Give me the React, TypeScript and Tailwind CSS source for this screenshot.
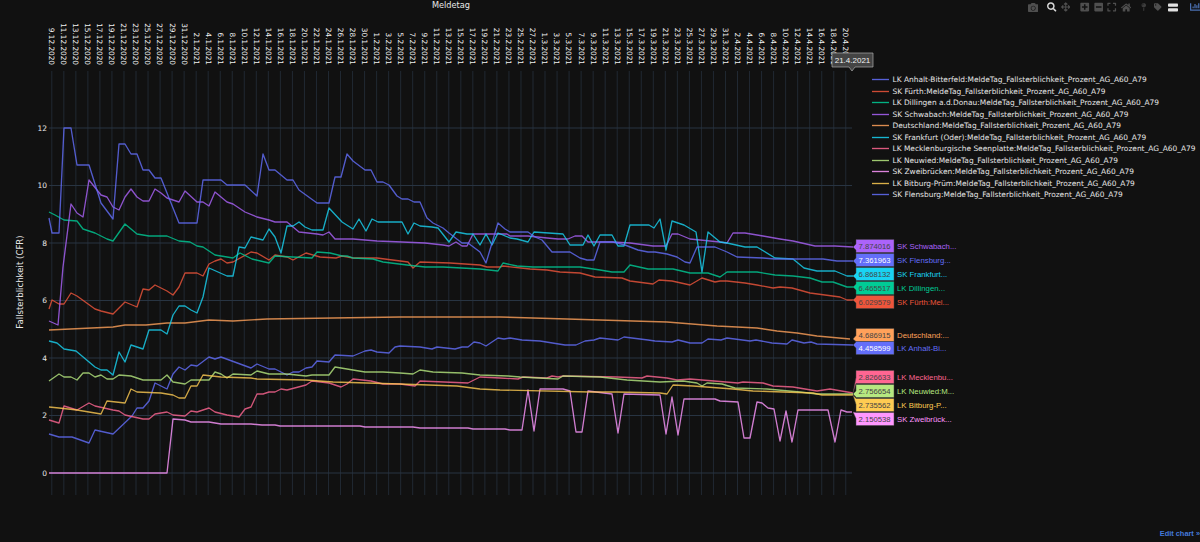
import {
  FaCamera,
  FaSearch,
  FaArrowsAlt,
  FaPlusSquare,
  FaMinusSquare,
  FaExpand,
  FaHome,
  FaMapPin,
  FaTag,
  FaChartBar,
} from 'react-icons/fa';

// traces are traced in chart pixels, same coordinate space as the svg
const SERIES = [
  {
    name: 'LK Anhalt-Bitterfeld',
    color: '#636efa',
    points:
      '49,434 59,437 72,437 89,443 95,430 113,434 132,416 137,408 143,408 149,401 155,383 167,389 173,374 179,367 185,370 191,365 197,366 209,357 215,359 221,357 251,368 257,364 269,369 275,369 287,375 293,372 299,372 306,368 312,367 317,361 329,362 335,355 353,356 365,351 371,350 377,352 389,353 395,347 400,346 420,347 432,349 437,347 455,349 462,347 468,347 474,342 480,343 486,346 498,338 504,339 510,338 522,340 540,341 565,345 576,345 585,341 594,340 600,338 618,340 624,337 648,340 655,341 672,342 678,340 690,343 702,343 708,339 721,340 727,338 750,341 756,340 772,343 787,344 792,340 804,343 811,342 817,344 853,345',
  },
  {
    name: 'SK Fürth',
    color: '#ef553b',
    points:
      '49,309 52,300 59,304 64,304 71,293 77,296 95,309 101,311 113,314 125,302 137,307 143,289 149,290 155,285 167,291 173,295 179,287 185,273 197,273 203,276 209,264 215,261 221,259 227,263 233,262 251,252 257,253 269,260 275,255 287,257 293,260 306,253 320,257 336,258 342,256 353,258 377,258 408,262 413,268 420,262 450,263 480,265 487,267 500,267 503,266 530,269 547,270 560,272 580,273 595,277 622,278 630,281 653,284 659,280 672,281 690,285 702,278 715,282 720,281 727,281 745,283 757,285 773,288 780,287 792,288 810,293 840,297 847,300 855,300',
  },
  {
    name: 'LK Dillingen a.d.Donau',
    color: '#00cc96',
    points:
      '49,212 55,215 64,220 77,221 83,229 89,231 95,233 107,239 113,241 125,224 137,234 149,236 167,236 179,241 190,242 197,246 203,247 215,255 227,257 233,258 240,253 252,259 269,263 275,256 293,257 312,258 317,252 330,253 342,256 347,256 353,258 373,259 383,262 407,265 425,267 443,267 480,269 498,271 503,263 517,266 533,267 560,267 580,267 600,270 612,272 624,272 630,265 648,269 673,269 690,273 708,273 720,277 727,272 757,272 775,275 793,276 810,278 822,282 833,282 847,287 855,287',
  },
  {
    name: 'SK Schwabach',
    color: '#ab63fa',
    points:
      '49,321 58,325 63,267 71,204 77,213 83,217 89,180 101,195 107,197 113,207 119,210 125,197 131,189 137,197 143,201 149,201 155,189 161,193 167,198 179,202 185,191 197,202 203,202 209,206 215,192 227,202 233,204 245,212 257,217 269,220 275,222 287,222 299,232 317,234 323,235 329,232 335,239 353,239 365,240 377,241 402,242 425,243 443,245 449,246 456,242 462,246 467,246 473,234 507,234 510,236 528,236 547,238 558,239 568,239 575,236 582,236 588,242 612,242 630,243 653,246 666,246 672,234 678,234 690,239 720,242 727,243 733,233 745,233 763,236 780,239 793,241 815,246 835,246 853,247',
  },
  {
    name: 'Deutschland',
    color: '#ffa15a',
    points:
      '49,330 113,327 125,325 146,325 167,323 185,323 209,320 233,321 267,319 333,318 400,317 500,317 567,319 633,321 667,322 717,326 757,328 777,331 797,333 817,336 850,339',
  },
  {
    name: 'SK Frankfurt (Oder)',
    color: '#19d3f3',
    points:
      '49,341 57,343 64,349 76,351 95,367 101,370 107,370 113,375 119,352 125,362 131,345 143,349 149,330 161,330 167,334 173,315 179,306 185,306 191,310 197,313 203,297 209,268 227,276 233,276 239,247 245,248 251,237 263,240 269,229 275,237 281,253 287,226 293,226 299,222 305,227 312,230 323,230 329,208 342,222 353,229 359,219 366,231 372,219 378,222 402,222 408,234 414,223 420,226 432,227 438,228 449,242 456,232 467,234 473,234 480,245 486,234 492,245 498,233 510,238 517,239 528,242 534,232 563,234 570,245 583,245 588,235 594,246 600,235 612,235 618,246 624,246 630,225 649,225 654,228 660,219 666,250 672,221 678,223 684,225 696,232 702,272 708,232 714,237 720,242 727,243 745,247 757,247 775,258 793,259 804,268 817,271 835,271 847,276 855,276',
  },
  {
    name: 'LK Mecklenburgische Seenplatte',
    color: '#ff6692',
    points:
      '49,420 59,423 64,406 77,410 89,403 95,406 113,410 119,411 125,415 143,419 149,419 155,414 167,412 173,415 185,416 191,411 197,412 209,408 215,412 227,415 239,417 245,409 251,407 257,394 263,394 269,392 275,392 281,389 287,390 306,385 312,381 329,383 341,387 347,384 353,379 371,381 383,384 400,384 415,386 420,381 468,383 480,377 500,378 518,379 523,377 547,378 552,376 558,377 563,376 617,377 642,378 647,376 667,378 677,380 690,379 738,383 743,382 763,383 773,386 793,387 817,391 830,389 853,393',
  },
  {
    name: 'LK Neuwied',
    color: '#b6e880',
    points:
      '49,381 59,374 64,377 71,377 77,380 83,373 89,373 95,377 101,375 107,379 113,379 119,375 131,376 143,380 161,380 167,375 173,382 185,384 191,380 209,380 215,372 221,374 227,378 233,374 251,375 257,371 269,374 287,374 306,376 312,375 329,375 335,367 341,368 353,370 365,372 383,372 400,373 413,374 420,370 433,372 462,373 480,375 508,376 520,377 558,379 563,376 600,377 627,380 660,382 683,381 697,383 702,386 707,383 722,384 735,388 767,389 800,392 817,394 853,394',
  },
  {
    name: 'SK Zweibrücken',
    color: '#ff97ff',
    points:
      '49,473 167,473 173,419 185,420 191,422 209,422 221,424 251,424 262,425 275,425 280,426 360,426 365,427 413,427 420,428 468,428 473,429 505,429 510,430 522,430 528,390 534,431 540,389 563,389 570,391 576,432 582,432 588,391 612,394 618,433 624,394 660,395 666,434 672,397 678,435 684,399 715,399 720,401 738,402 744,438 750,438 757,402 762,403 768,408 774,409 780,441 786,411 792,442 798,410 828,410 835,442 841,410 847,412 852,412',
  },
  {
    name: 'LK Bitburg-Prüm',
    color: '#fecb52',
    points:
      '49,407 59,408 77,410 95,413 101,414 107,401 125,403 131,389 137,392 161,393 173,395 179,398 185,398 191,386 197,386 203,375 221,377 251,378 257,379 306,380 333,382 367,383 400,384 457,386 480,389 500,390 590,392 617,392 660,393 667,394 673,385 693,386 733,389 753,391 783,392 813,393 822,395 853,395',
  },
  {
    name: 'SK Flensburg',
    color: '#636efa',
    points:
      '49,218 52,233 59,233 64,128 71,128 77,165 89,165 101,203 113,219 119,144 125,144 131,154 137,154 143,170 149,170 155,178 161,178 179,223 197,223 203,180 221,180 227,185 245,185 257,196 263,154 269,170 275,170 287,180 293,180 299,190 317,203 329,203 335,177 341,177 347,154 353,161 365,170 371,170 377,182 383,182 389,185 397,196 402,199 408,199 414,202 420,202 427,218 433,223 443,228 449,233 462,243 468,243 480,252 486,263 498,223 505,229 510,232 528,232 535,237 542,240 552,252 570,252 580,258 587,260 594,260 600,242 613,242 625,245 638,250 648,252 655,252 667,254 677,257 685,262 690,263 697,247 715,247 727,252 737,257 763,258 775,259 823,259 837,261 853,261',
  },
];

const HOVER_LABELS = [
  { value: '7.874016', name: 'SK Schwabach...', y: 246, tip: 247, fill: '#ab63fa', text: '#444444', nameColor: '#ab63fa' },
  { value: '7.361963', name: 'SK Flensburg...', y: 260, tip: 261, fill: '#636efa', text: '#ffffff', nameColor: '#636efa' },
  { value: '6.868132', name: 'SK Frankfurt...', y: 274, tip: 276, fill: '#19d3f3', text: '#444444', nameColor: '#19d3f3' },
  { value: '6.465517', name: 'LK Dillingen...', y: 288, tip: 287, fill: '#00cc96', text: '#444444', nameColor: '#00cc96' },
  { value: '6.029579', name: 'SK Fürth:Mel...', y: 302, tip: 300, fill: '#ef553b', text: '#444444', nameColor: '#ef553b' },
  { value: '4.686915', name: 'Deutschland:...', y: 335, tip: 339, fill: '#ffa15a', text: '#444444', nameColor: '#ffa15a' },
  { value: '4.458599', name: 'LK Anhalt-Bi...', y: 348, tip: 345, fill: '#636efa', text: '#ffffff', nameColor: '#636efa' },
  { value: '2.826633', name: 'LK Mecklenbu...', y: 377, tip: 393, fill: '#ff6692', text: '#444444', nameColor: '#ff6692' },
  { value: '2.756654', name: 'LK Neuwied:M...', y: 391, tip: 394, fill: '#b6e880', text: '#444444', nameColor: '#b6e880' },
  { value: '2.735562', name: 'LK Bitburg-P...', y: 405, tip: 395, fill: '#fecb52', text: '#444444', nameColor: '#fecb52' },
  { value: '2.150538', name: 'SK Zweibrück...', y: 419, tip: 412, fill: '#ff97ff', text: '#444444', nameColor: '#ff97ff' },
];

const X0 = 51.8;
const DAY = 6.015;
const TICKS = Array.from({ length: 67 }, (_, i) => {
  const d = new Date(2020, 11, 9 + i * 2);
  return {
    x: X0 + i * 2 * DAY,
    label: `${d.getDate()}.${d.getMonth() + 1}.${d.getFullYear()}`,
  };
});

const Y_TICKS = [0, 2, 4, 6, 8, 10, 12];
const yPos = (v: number) => 473 - v * 28.75;

function HoverTag({ label }: { label: (typeof HOVER_LABELS)[number] }) {
  const top = label.y - 6.5;
  const bottom = label.y + 6.5;
  const a = Math.max(top, Math.min(label.tip - 3, bottom - 6));
  const b = Math.min(bottom, a + 6);
  return (
    <g>
      <polygon
        points={`853,${label.tip} 856,${a} 856,${top} 894,${top} 894,${bottom} 856,${bottom} 856,${b}`}
        fill={label.fill}
        stroke="#444"
        strokeWidth={0.5}
      />
      <text x={858.5} y={label.y + 2.7} fontSize={7.7} fill={label.text} fontFamily="'Liberation Sans', sans-serif">
        {label.value}
      </text>
      <text x={897} y={label.y + 2.7} fontSize={7.8} fill={label.nameColor} fontFamily="'Liberation Sans', sans-serif">
        {label.name}
      </text>
    </g>
  );
}

function Chart() {
  return (
    <svg width={870} height={542} viewBox="0 0 870 542" className="block shrink-0 overflow-visible">
      <text x={451} y={8} fontSize={8.2} fill="#e8e8e8" textAnchor="middle">
        Meldetag
      </text>
      <text
        transform="translate(23 282) rotate(-90)"
        fontSize={8.6}
        fill="#e8e8e8"
        textAnchor="middle"
      >
        Fallsterblichkeit (CFR)
      </text>

      {TICKS.map(t => (
        <line key={t.x} x1={t.x} x2={t.x} y1={71} y2={495} stroke="#283442" strokeWidth={0.7} />
      ))}
      {Y_TICKS.map(v => (
        <line
          key={v}
          x1={49}
          x2={852}
          y1={yPos(v)}
          y2={yPos(v)}
          stroke="#283442"
          strokeWidth={v === 0 ? 1.2 : 1}
        />
      ))}

      {TICKS.map(t => (
        <text
          key={t.label}
          transform={`translate(${t.x - 2.6} 65) rotate(90)`}
          fontSize={7.3}
          fill="#f0f0f0"
          textAnchor="end"
        >
          {t.label}
        </text>
      ))}
      {Y_TICKS.map(v => (
        <text key={v} x={47} y={yPos(v) + 2.7} fontSize={7.5} fill="#e8e8e8" textAnchor="end">
          {v}
        </text>
      ))}

      {SERIES.map(s => (
        <polyline
          key={s.name}
          points={s.points}
          fill="none"
          stroke={s.color}
          strokeWidth={1.35}
          strokeOpacity={0.8}
          strokeLinejoin="round"
        />
      ))}

      {HOVER_LABELS.map(l => (
        <HoverTag key={l.value} label={l} />
      ))}

      {/* x spike label */}
      <polygon
        points="832,53 873,53 873,67 855,67 852,71 849,67 832,67"
        fill="#444"
        stroke="#aaa"
        strokeWidth={0.7}
      />
      <text x={852.5} y={63} fontSize={8} fill="#f2f2f2" textAnchor="middle" fontFamily="'Liberation Sans', sans-serif">
        21.4.2021
      </text>
    </svg>
  );
}

function Modebar() {
  return (
    <div className="flex h-[14px] items-center text-[#4f4f4f]">
      <FaCamera className="ml-[158px] h-[11px] w-[11px]" />
      <FaSearch className="ml-[9px] h-[10px] w-[10px] text-[#d8d8d8]" />
      <FaArrowsAlt className="ml-[4px] h-[10px] w-[10px]" />
      <FaPlusSquare className="ml-[10px] h-[10px] w-[10px]" />
      <FaMinusSquare className="ml-[4px] h-[10px] w-[10px]" />
      <FaExpand className="ml-[4px] h-[10px] w-[10px]" />
      <FaHome className="ml-[4px] h-[11px] w-[11px]" />
      <FaMapPin className="ml-[9px] h-[8px] w-[8px] text-[#3d3d3d]" />
      <FaTag className="ml-[7px] h-[8px] w-[8px]" />
      <svg width={10} height={9} viewBox="0 0 10 9" className="ml-[6px] shrink-0 text-[#e2e2e2]">
        <rect x={0} y={0.5} width={10} height={3.2} rx={0.8} fill="currentColor" />
        <rect x={0} y={5.3} width={10} height={3.2} rx={0.8} fill="currentColor" />
      </svg>
      <FaChartBar className="ml-[12px] h-[10px] w-[10px] shrink-0 text-[#4a6fb0]" />
    </div>
  );
}

function Legend() {
  return (
    <ul className="mt-[60px] flex flex-col pl-[2px]">
      {SERIES.map(s => (
        <li key={s.name} className="flex h-[11.5px] items-center whitespace-nowrap">
          <svg width={17} height={3} viewBox="0 0 17 3" className="shrink-0">
            <line x1={0} x2={17} y1={1.5} y2={1.5} stroke={s.color} strokeWidth={1.35} strokeOpacity={0.85} />
          </svg>
          <span className="ml-[3.5px] text-[7.45px] text-[#e6e6e6]">
            {s.name}:MeldeTag_Fallsterblichkeit_Prozent_AG_A60_A79
          </span>
        </li>
      ))}
    </ul>
  );
}

export default function App() {
  return (
    <div className="flex h-[542px] w-[1200px] overflow-hidden bg-[#111111] font-['DejaVu_Sans']">
      <Chart />
      <div className="flex min-w-0 flex-1 flex-col">
        <Modebar />
        <Legend />
        <div className="mt-auto pb-[3px] text-right font-['Liberation_Sans'] text-[7.4px] font-bold text-[#447adb]">Edit chart »</div>
      </div>
    </div>
  );
}
